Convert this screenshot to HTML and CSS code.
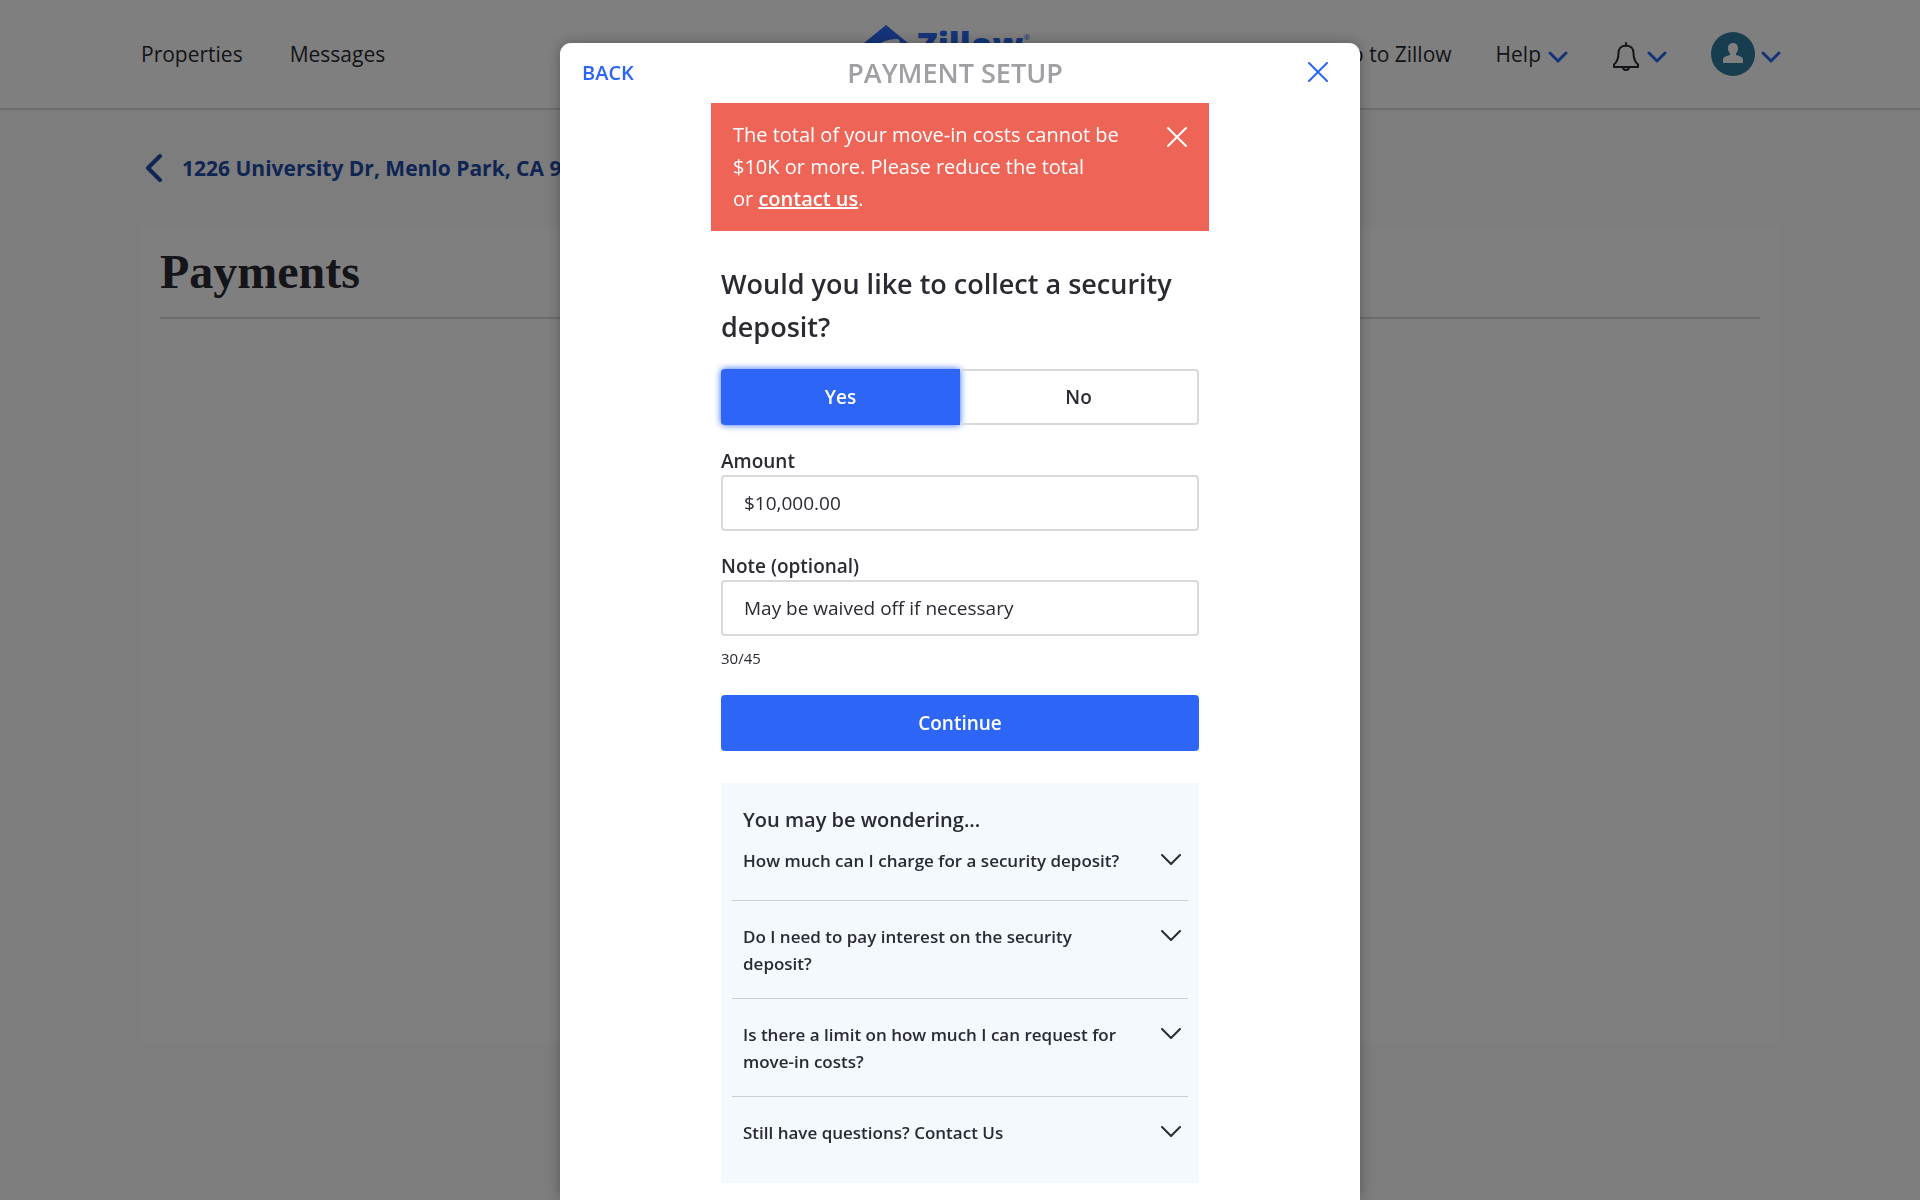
FILE: index.html
```
<!DOCTYPE html>
<html lang="en">
<head>
  <meta charset="UTF-8" />
  <meta name="viewport" content="width=device-width, initial-scale=1.0" />
  <title>Payments</title>
  <link rel="stylesheet" href="styles.css">
</head>
<body>
  <header class="topbar">
    <nav class="nav nav-left">
      <a href="#">Properties</a>
      <a href="#">Messages</a>
    </nav>
    <a href="#" class="logo">
      <svg class="logo-house" viewBox="0 0 44 44"><path d="M22 0 44 18v3l-8-3c0-2-1-4-3-4-11 0-22 6-33 14V18z"/><path d="M34 20l10 6v18H0v-6c9-8 20-15 34-18z"/></svg>
      <span class="logo-text">Zillow</span><span class="logo-reg">®</span>
    </a>
    <nav class="nav nav-right">
      <a href="#">Go to Zillow</a>
      <button class="menu">Help <svg class="caret" viewBox="0 0 20 12"><path d="M2 2l8 8 8-8"/></svg></button>
      <button class="menu" aria-label="Notifications">
        <svg class="bell" viewBox="0 0 28 30"><path d="M14 1v3M14 3.500C9 3.500 6.500 7 6.500 11c0 6-1.500 9-4.500 11.500V25h24v-2.500C23 20 21.500 17 21.500 11c0-4-2.500-7.500-7.500-7.500z"/><path d="M11 25a3 3 0 0 0 6 0"/></svg>
        <svg class="caret" viewBox="0 0 20 12"><path d="M2 2l8 8 8-8"/></svg>
      </button>
      <button class="menu menu-user" aria-label="Account">
        <svg class="avatar" viewBox="0 0 44 44"><circle cx="22" cy="22" r="22"/><path d="M22 11c-3 0-5 2.200-5 5 0 2 .6 4 2 5.500v1.500c-4 1-7 2-7 5V31h20v-3c0-3-3-4-7-5v-1.500c1.400-1.500 2-3.500 2-5.500 0-2.800-2-5-5-5z"/></svg>
        <svg class="caret" viewBox="0 0 20 12"><path d="M2 2l8 8 8-8"/></svg>
      </button>
    </nav>
  </header>

  <main class="page">
    <a href="#" class="address">
      <svg viewBox="0 0 18 30"><path d="M15 3L3 15l12 12"/></svg>
      1226 University Dr, Menlo Park, CA 94025
    </a>
    <section class="card">
      <h1>Payments</h1>
    </section>
  </main>

  <div class="overlay">
    <div class="modal" role="dialog" aria-labelledby="modal-title">
      <div class="modal-header">
        <button class="back">BACK</button>
        <h2 id="modal-title">PAYMENT SETUP</h2>
        <button class="close" aria-label="Close"><svg viewBox="0 0 20 20"><path d="M1 1l18 18M19 1L1 19"/></svg></button>
      </div>

      <div class="alert" role="alert">
        <p>The total of your move-in costs cannot be $10K or more. Please reduce the total or&nbsp;<a href="#">contact us</a>.</p>
        <button class="close" aria-label="Dismiss"><svg viewBox="0 0 20 20"><path d="M1 1l18 18M19 1L1 19"/></svg></button>
      </div>

      <form class="deposit">
        <h3>Would you like to collect a security deposit?</h3>
        <div class="toggle">
          <button type="button" class="active">Yes</button>
          <button type="button">No</button>
        </div>

        <label for="amount">Amount</label>
        <input type="text" id="amount" value="$10,000.00" />

        <label for="note">Note (optional)</label>
        <input type="text" id="note" value="May be waived off if necessary" maxlength="45" />
        <div class="counter">30/45</div>

        <button type="button" class="continue">Continue</button>

        <div class="faq">
          <h4>You may be wondering...</h4>
          <button type="button" class="question">
            <span>How much can I charge for a security deposit?</span>
            <svg viewBox="0 0 20 12"><path d="M1 1l9 9 9-9"/></svg>
          </button>
          <button type="button" class="question">
            <span>Do I need to pay interest on the security deposit?</span>
            <svg viewBox="0 0 20 12"><path d="M1 1l9 9 9-9"/></svg>
          </button>
          <button type="button" class="question">
            <span>Is there a limit on how much I can request for move-in costs?</span>
            <svg viewBox="0 0 20 12"><path d="M1 1l9 9 9-9"/></svg>
          </button>
          <button type="button" class="question">
            <span>Still have questions? Contact Us</span>
            <svg viewBox="0 0 20 12"><path d="M1 1l9 9 9-9"/></svg>
          </button>
        </div>
      </form>
    </div>
  </div>
</body>
</html>
```

FILE: styles.css
```
* {
  box-sizing: border-box;
}
body {
  margin: 0;
  min-height: 100vh;
  background: #fafafa;
  color: #2a2a33;
  font-family: "Open Sans", sans-serif;
  font-size: 19px;
}
h1, h2, h3, h4, p {
  margin: 0;
}
button, input {
  font: inherit;
  color: inherit;
}
button {
  background: none;
  border: none;
  padding: 0;
  cursor: pointer;
}
svg {
  display: block;
  flex-shrink: 0;
  fill: none;
  stroke: currentColor;
  stroke-linecap: round;
  stroke-linejoin: round;
}

/* top bar */
.topbar {
  display: grid;
  grid-template-columns: 1fr auto 1fr;
  align-items: center;
  height: 110px;
  padding: 0 139px 0 141px;
  background: #fff;
  border-bottom: 2px solid #d8d8de;
}
.nav {
  display: flex;
  align-items: center;
  font-size: 21px;
}
.nav a {
  color: inherit;
  text-decoration: none;
}
.nav-left {
  gap: 47px;
}
.nav-right {
  justify-content: flex-end;
  gap: 44px;
}
.menu {
  display: flex;
  align-items: center;
  gap: 7px;
}
.menu-user {
  gap: 6px;
}
.caret {
  width: 20px;
  height: 12px;
  margin-top: 5px;
  color: #2a68f0;
  stroke-width: 3;
}
.bell {
  width: 28px;
  height: 30px;
  margin-top: 5px;
  stroke-width: 2;
}
.avatar {
  width: 44px;
  height: 44px;
  stroke: none;
}
.avatar circle {
  fill: #2e7a9c;
}
.avatar path {
  fill: #fff;
}
.logo {
  display: flex;
  align-self: start;
  align-items: flex-start;
  margin-right: 28px;
  padding-top: 25px;
  color: #2a6af5;
  text-decoration: none;
}
.logo-house {
  width: 44px;
  height: 44px;
  margin-right: 9px;
  fill: currentColor;
  stroke: none;
}
.logo-text {
  font-size: 34px;
  font-weight: 800;
  line-height: 38px;
}
.logo-reg {
  font-size: 8px;
  line-height: 24px;
}

/* page behind the dialog */
.page {
  padding: 35px 140px;
}
.address {
  display: flex;
  align-items: center;
  gap: 19px;
  padding-left: 5px;
  color: #1f4aa8;
  font-size: 21px;
  font-weight: 700;
  line-height: 46px;
  text-decoration: none;
}
.address svg {
  width: 18px;
  height: 30px;
  stroke-width: 4;
}
.card {
  min-height: 815px;
  margin-top: 36px;
  padding: 16px 20px;
  background: #fff;
}
.card h1 {
  padding-bottom: 16px;
  border-bottom: 2px solid #d8d8de;
  font-family: "Liberation Serif", serif;
  font-size: 48px;
  line-height: 58px;
}

/* dialog */
.overlay {
  position: fixed;
  inset: 0;
  display: flex;
  justify-content: center;
  padding-top: 43px;
  background: rgba(0, 0, 0, 0.5);
  overflow: hidden;
}
.modal {
  width: 800px;
  background: #fff;
  border-radius: 11px 11px 0 0;
  box-shadow: 0 0 14px rgba(0, 0, 0, 0.3);
}
.modal-header {
  display: grid;
  grid-template-columns: 1fr auto 1fr;
  align-items: center;
  height: 60px;
  padding: 0 32px 2px 22px;
}
.modal-header h2 {
  color: #a0a0a4;
  font-size: 27px;
  font-weight: 600;
}
.back {
  justify-self: start;
  color: #2b65f5;
  font-size: 20px;
  font-weight: 600;
}
.close {
  color: #2b65f5;
}
.modal-header .close {
  justify-self: end;
}
.close svg {
  width: 20px;
  height: 20px;
  stroke-width: 2;
}
.alert {
  display: flex;
  align-items: flex-start;
  justify-content: space-between;
  width: 498px;
  margin: 0 auto;
  padding: 16px 22px;
  background: #ee6558;
  color: #fff;
  font-size: 20px;
  line-height: 32px;
}
.alert p {
  width: 400px;
}
.alert a {
  color: inherit;
  font-weight: 600;
}
.alert .close {
  margin: 8px 0;
  color: #fff;
}
.deposit {
  width: 478px;
  margin: 0 auto;
  padding-top: 31px;
}
.deposit h3 {
  font-size: 27px;
  font-weight: 600;
  line-height: 43px;
}
.toggle {
  display: grid;
  grid-template-columns: 1fr 1fr;
  height: 56px;
  margin: 21px 0 23px;
}
.toggle button {
  border: 2px solid #d8d9dd;
  border-left: none;
  border-radius: 0 4px 4px 0;
  font-weight: 600;
}
.toggle .active {
  background: #2d66f6;
  border: none;
  border-radius: 4px 0 0 4px;
  box-shadow: 0 0 7px #2d66f6;
  color: #fff;
}
.deposit label {
  display: block;
  font-weight: 600;
  line-height: 27px;
}
.deposit input {
  display: block;
  width: 100%;
  height: 56px;
  margin-bottom: 22px;
  padding: 0 21px;
  border: 2px solid #d8d9dd;
  border-radius: 4px;
  background: #fff;
}
.deposit #note {
  margin-bottom: 10px;
}
.counter {
  font-size: 15px;
  line-height: 24px;
}
.continue {
  width: 100%;
  height: 56px;
  margin: 25px 0 32px;
  border-radius: 4px;
  background: #2d66f6;
  color: #fff;
  font-weight: 600;
}
.faq {
  padding: 21px 11px 37px;
  background: #f4f9fe;
}
.faq h4 {
  padding: 0 11px;
  font-size: 20px;
  font-weight: 600;
  line-height: 32px;
}
.question {
  display: flex;
  align-items: flex-start;
  justify-content: space-between;
  width: 100%;
  padding: 22px 7px 21px 11px;
  border-bottom: 1px solid #cdd0d6;
  font-size: 17px;
  font-weight: 600;
  line-height: 27px;
  text-align: left;
}
.question span {
  max-width: 390px;
}
.question svg {
  width: 20px;
  height: 12px;
  margin-top: 7px;
  stroke-width: 2;
}
.faq h4 + .question {
  padding-top: 11px;
  padding-bottom: 26px;
}
.question:last-child {
  padding-bottom: 0;
  border-bottom: none;
}
```
